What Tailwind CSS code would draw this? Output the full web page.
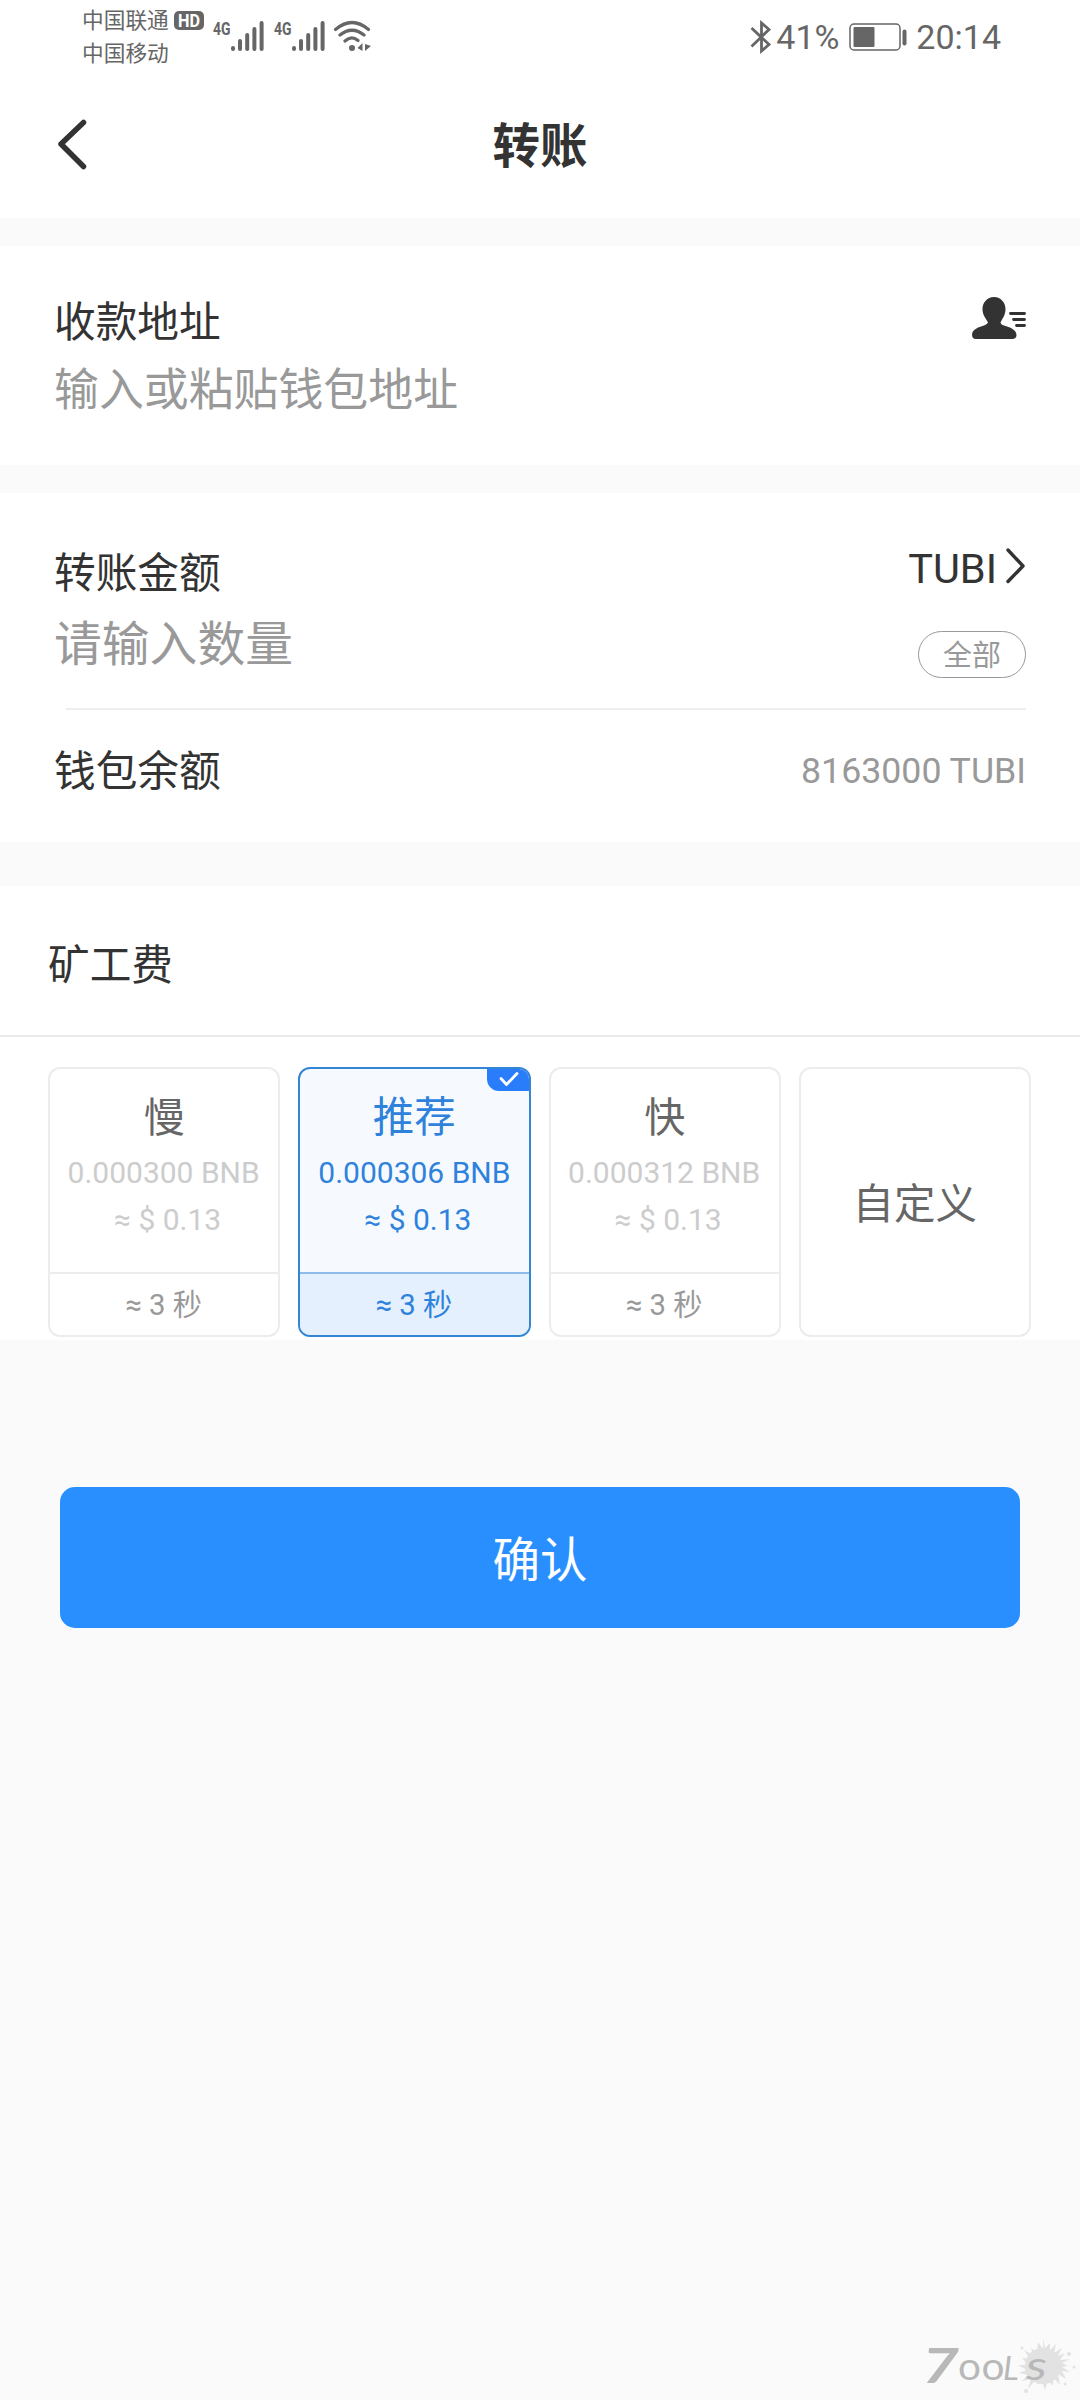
<!DOCTYPE html>
<html lang="zh-CN">
<head>
<meta charset="utf-8">
<title>转账</title>
<script src="https://cdn.jsdelivr.net/npm/@tailwindcss/browser@4"></script>
</head>
<body class="bg-[#fafafa]">
<div class="relative flex h-[2400px] w-[1080px] flex-col overflow-hidden bg-[#fafafa] font-[Roboto,'Noto_Sans_CJK_SC',sans-serif] text-[#333] whitespace-nowrap">

  <!-- status bar -->
  <header class="flex h-[72px] shrink-0 items-start justify-between bg-white pl-[82px] pr-[79px] text-[#666]">
    <div class="flex">
      <div class="flex w-[92px] flex-col pt-1 text-[21.7px]">
        <div class="h-[33px] leading-[33px]">中国联通</div>
        <div class="h-[33px] leading-[33px]">中国移动</div>
      </div>
      <svg class="mt-[11px] h-[19px] w-[30px] overflow-visible" viewBox="0 0 30 19"><rect width="30" height="19" rx="5" fill="#666"/><text x="4" y="15.500" textLength="22" lengthAdjust="spacingAndGlyphs" font-family="Roboto" font-size="17.500" font-weight="700" fill="#fff">HD</text></svg>
      <div class="ml-[9px] flex w-[61px]">
        <svg class="mt-[12px] h-[32px] w-[18px] overflow-visible" viewBox="0 0 18 32"><text x="0" y="22.500" textLength="17.500" lengthAdjust="spacingAndGlyphs" font-family="Roboto" font-size="19" font-weight="700" fill="#666">4G</text></svg>
        <svg class="mt-[20px] h-[32px] w-[34px]" viewBox="0 0 34 32" stroke="#666" stroke-width="4" stroke-linecap="round"><path d="M2 28v1M9 21v8M16.200 15v14M23.400 9v20M30.600 3v26"/></svg>
      </div>
      <div class="flex w-[59px]">
        <svg class="mt-[12px] h-[32px] w-[18px] overflow-visible" viewBox="0 0 18 32"><text x="0" y="22.500" textLength="17.500" lengthAdjust="spacingAndGlyphs" font-family="Roboto" font-size="19" font-weight="700" fill="#666">4G</text></svg>
        <svg class="mt-[20px] h-[32px] w-[34px]" viewBox="0 0 34 32" stroke="#666" stroke-width="4" stroke-linecap="round"><path d="M2 28v1M9 21v8M16.200 15v14M23.400 9v20M30.600 3v26"/></svg>
      </div>
      <svg class="mt-[19px] h-[34px] w-[38px]" viewBox="0 0 38 34" fill="none" stroke="#666" stroke-width="3.200" stroke-linecap="round"><path d="M2.500 10.500Q19-3.500 35.500 10.500M7 16Q19 6.500 31 16M12 22Q18.500 16 25 21.500"/><circle cx="19" cy="29" r="3" fill="#666" stroke="none"/><path d="M29.500 24v8l-5-3zM32 25v7l6-5z" fill="#666" stroke="none"/></svg>
    </div>
    <div class="flex items-center pt-[17px]">
      <svg class="h-[36px] w-[22px]" viewBox="0 0 22 36" fill="none" stroke="#666" stroke-width="2.800"><path d="M1.500 9L19 25.500L11.500 32V4L19 10.500L1.500 27.500"/></svg>
      <span class="ml-[4px] w-[73px] text-[34px] leading-[40px]">41%</span>
      <svg class="h-[36px] w-[60px]" viewBox="0 0 60 36"><rect x="1" y="5" width="50" height="26" rx="4" fill="none" stroke="#666" stroke-width="1.500"/><rect x="4.500" y="8" width="21" height="20" rx="1" fill="#666"/><rect x="53.500" y="10.500" width="4" height="16" rx="2" fill="#666"/></svg>
      <span class="ml-[7px] text-[34px] leading-[40px]">20:14</span>
    </div>
  </header>

  <!-- title bar -->
  <nav class="grid h-[146px] shrink-0 grid-cols-[1fr_auto_1fr] items-center bg-white px-[56px]">
    <svg class="mb-[2px] h-[52px] w-[32px]" viewBox="0 0 32 52" fill="none" stroke="#333" stroke-width="5.500" stroke-linecap="round" stroke-linejoin="round"><path d="M27.500 4.500L5 26L27.500 48.500"/></svg>
    <h1 class="pt-[3px] text-[47.500px] leading-[60px] font-bold">转账</h1>
  </nav>

  <!-- recipient -->
  <section class="mt-[28px] flex h-[219px] shrink-0 justify-between bg-white pl-[54px] pr-[53px] pt-[47px]">
    <div class="flex flex-col">
      <div class="h-[60px] text-[41.700px] leading-[60px]">收款地址</div>
      <div class="mt-[8px] h-[60px] text-[44.900px] leading-[60px] text-[#999]">输入或粘贴钱包地址</div>
    </div>
    <svg class="mt-[3px] h-[44px] w-[56px]" viewBox="0 0 56 44" fill="#333"><path d="M23 1C30 1 35 7 34.500 14C34 20 31 23 29.500 26.500C30 28 31 29 33 29.500C39 31 45.500 34 45.500 39Q45.500 43 41 43H5Q1 43 1 38.500C1 34 7 31 13 29.500Q16 28.500 17 26.500C15 22.500 12 20 11.500 14C11 7 16 1 23 1Z"/><path d="M39.500 17.500H53.500M42.500 23.500H53.500M45.500 29.500H53.500" stroke="#333" stroke-width="2.800" stroke-linecap="round"/></svg>
  </section>

  <!-- amount -->
  <section class="mt-[28px] flex h-[349px] shrink-0 flex-col bg-white pl-[54px] pr-[54px] pt-[51px]">
    <div class="flex h-[164px] justify-between">
      <div class="flex flex-col">
        <div class="h-[60px] text-[41.700px] leading-[60px]">转账金额</div>
        <div class="mt-[11px] h-[60px] text-[47.800px] leading-[60px] text-[#999]">请输入数量</div>
      </div>
      <div class="flex flex-col items-end">
        <div class="flex h-[60px] items-start">
          <span class="text-[41.500px] leading-[49px]">TUBI</span>
          <svg class="ml-[7px] mt-[3px] h-[38px] w-[22px]" viewBox="0 0 22 38" fill="none" stroke="#333" stroke-width="3.400" stroke-linecap="round" stroke-linejoin="round"><path d="M4 3L19 19L4 34.500"/></svg>
        </div>
        <div class="mt-[27px] flex h-[47px] w-[108px] items-center justify-center rounded-full border border-[#999] pt-[3px] text-[29px] leading-[40px] text-[#999]">全部</div>
      </div>
    </div>
    <div class="ml-[12px] h-[2px] shrink-0 bg-[#eee]"></div>
    <div class="flex h-[122px] items-center justify-between pt-[1px]">
      <span class="text-[41.700px] leading-[60px]">钱包余额</span>
      <span class="pb-[2px] text-[35.700px] leading-[60px] text-[#999]">8163000 TUBI</span>
    </div>
  </section>

  <!-- miner fee -->
  <section class="mt-[44px] flex h-[454px] shrink-0 flex-col bg-white">
    <div class="flex h-[151px] shrink-0 items-center border-b-2 border-[#ebebeb] pl-[48px] pt-[10px] text-[41.700px] leading-[60px]">矿工费</div>
    <div class="mt-[30px] grid h-[270px] grid-cols-4 gap-[18px] pl-[48px] pr-[49px]">
      <div class="flex flex-col rounded-[12px] border-2 border-[#ececec] text-center">
        <div class="flex h-[203px] flex-col items-center pt-[19px]">
          <div class="h-[60px] text-[41px] leading-[60px] text-[#666]">慢</div>
          <div class="h-[47px] pt-[1px] pr-[1px] text-[30px] leading-[47px] text-[#ccc]">0.000300 BNB</div>
          <div class="h-[47px] pt-[1px] pl-[7px] text-[30px] leading-[47px] text-[#ccc]">≈ $ 0.13</div>
        </div>
        <div class="flex flex-1 items-center justify-center border-t-2 border-[#ececec] pt-[1px] pr-[1px] text-[29.300px] leading-[40px] text-[#999]">≈ 3 秒</div>
      </div>
      <div class="relative flex flex-col overflow-hidden rounded-[12px] border-2 border-[#3385d6] bg-[#f6faff] text-center text-[#2f82dc]">
        <div class="flex h-[203px] flex-col items-center pt-[19px]">
          <div class="h-[60px] text-[41.500px] leading-[60px]">推荐</div>
          <div class="h-[47px] pt-[1px] text-[30px] leading-[47px]">0.000306 BNB</div>
          <div class="h-[47px] pt-[1px] pl-[7px] text-[30px] leading-[47px]">≈ $ 0.13</div>
        </div>
        <div class="flex flex-1 items-center justify-center border-t-2 border-[#8fbbea] bg-[#e4f0fe] pt-[1px] pr-[1px] text-[29.300px] leading-[40px]">≈ 3 秒</div>
        <div class="absolute -top-[2px] -right-[2px] flex h-[24px] w-[44px] items-center justify-center rounded-bl-[12px] bg-[#2a7dfa]">
          <svg class="h-[16px] w-[20px]" viewBox="0 0 20 16" fill="none" stroke="#fff" stroke-width="2.800" stroke-linecap="round" stroke-linejoin="round"><path d="M2 7.500L7.500 13.500L18 2.500"/></svg>
        </div>
      </div>
      <div class="flex flex-col rounded-[12px] border-2 border-[#ececec] text-center">
        <div class="flex h-[203px] flex-col items-center pt-[19px]">
          <div class="h-[60px] text-[41px] leading-[60px] text-[#666]">快</div>
          <div class="h-[47px] pt-[1px] pr-[1px] text-[30px] leading-[47px] text-[#ccc]">0.000312 BNB</div>
          <div class="h-[47px] pt-[1px] pl-[7px] text-[30px] leading-[47px] text-[#ccc]">≈ $ 0.13</div>
        </div>
        <div class="flex flex-1 items-center justify-center border-t-2 border-[#ececec] pt-[1px] pr-[1px] text-[29.300px] leading-[40px] text-[#999]">≈ 3 秒</div>
      </div>
      <div class="flex items-center justify-center rounded-[12px] border-2 border-[#ececec] pt-[5px] text-[41.500px] leading-[60px] text-[#666]">自定义</div>
    </div>
  </section>

  <button class="mx-[60px] mt-[147px] flex h-[141px] shrink-0 items-center justify-center rounded-[15px] bg-[#298fff] pt-[7px] text-[47.500px] leading-[60px] text-white">确认</button>

  <!-- watermark -->
  <svg class="absolute bottom-0 right-0 h-[80px] w-[180px]" viewBox="0 0 180 80">
    <path fill="#e2e2e2" d="M143 19l2 9 5-5 0 7 6-6-2 9 8-5-4 8 7-3-5 7 10-1-8 4 6 3-6 1 8 5-8-1 4 8-8-5 2 11-7-8 0 9-5-6-3 10-3-9-5 4 0-7-9 11 3-10-9 2 6-6-9-2 8-3-9-5 10 0-6-7 8 1-6-9 9 5-2-7 6 4 1-10 5 7z"/>
    <g fill="#e2e2e2"><circle cx="143" cy="46" r="18"/><circle cx="169" cy="34" r="2"/><circle cx="174" cy="47" r="1.500"/><circle cx="126" cy="71" r="2"/><circle cx="165" cy="64" r="1.500"/><circle cx="122" cy="28" r="1.500"/></g>
    <g fill="#b8b8b8" font-family="Lato">
      <text x="22" y="63" font-size="48" font-weight="700" font-style="italic" textLength="37" lengthAdjust="spacingAndGlyphs">7</text>
      <text x="58" y="60" font-size="38" font-weight="400" textLength="23" lengthAdjust="spacingAndGlyphs">o</text>
      <text x="81.500" y="60" font-size="38" font-weight="400" textLength="23" lengthAdjust="spacingAndGlyphs">o</text>
      <text x="103" y="60" font-size="33" font-style="italic">L</text>
      <text x="126" y="60" font-size="41" font-style="italic" textLength="21" lengthAdjust="spacingAndGlyphs">s</text>
    </g>
  </svg>
</div>
</body>
</html>
